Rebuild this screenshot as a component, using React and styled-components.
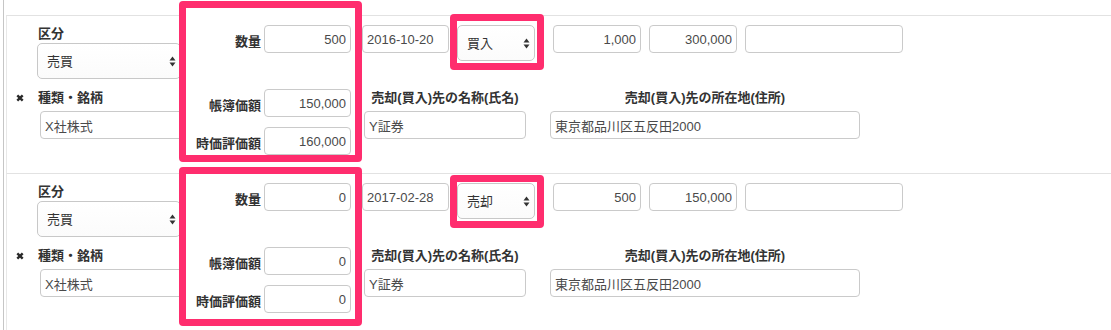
import styled, { createGlobalStyle } from 'styled-components';

const GlobalStyle = createGlobalStyle`
  html, body {
    margin: 0;
    padding: 0;
    background: #fff;
  }
  body {
    font-family: "Liberation Sans", "Noto Sans CJK JP", sans-serif;
    font-size: 13px;
    color: #333;
    overflow: hidden;
  }
`;

const PINK = '#ff2d6e';

const Page = styled.div`
  width: 1111px;
  height: 330px;
  overflow: hidden;
  box-sizing: border-box;
  padding-left: 3px;
`;

const Frame = styled.div`
  height: 100%;
  box-sizing: border-box;
  border-left: 1px solid #c6c6c6;
  padding-left: 2px;
  padding-top: 15px;
`;

const Record = styled.div`
  display: flex;
  height: 158px;
  box-sizing: border-box;
  border-top: 1px solid #e2e2e2;
  border-left: 1px solid #e8e8e8;
`;

const KindCol = styled.div`
  width: 172px;
  flex: none;
  box-sizing: border-box;
  padding: 9px 0 0 30px;
  display: flex;
  flex-direction: column;
  align-items: flex-start;
`;

const Label = styled.div`
  font-weight: bold;
  font-size: 13px;
  line-height: 18px;
  color: #333;
  white-space: nowrap;
  margin-left: ${(p) => p.$indent || 0}px;
`;

const LabelRow = styled.div`
  display: flex;
  align-items: center;
  margin: 10px 0 0 -21px;
  gap: 14px;
`;

const Input = styled.input`
  box-sizing: border-box;
  width: ${(p) => p.$w}px;
  height: 28px;
  margin: 0 0 0 ${(p) => p.$ml || 0}px;
  padding: 0 4px;
  border: 1px solid #cacaca;
  border-radius: 4px;
  background: #fff;
  font-family: "Liberation Sans", "Noto Sans CJK JP", sans-serif;
  font-size: 13px;
  color: #4a4a4a;
  text-align: ${(p) => (p.$num ? 'right' : 'left')};
  outline: none;
  flex: none;
`;

const StackInput = styled(Input)`
  margin-top: 4px;
`;

const SelectBox = styled.div`
  position: relative;
  width: ${(p) => p.$w}px;
  height: 36px;
  flex: none;
`;

const Select = styled.select`
  appearance: none;
  -webkit-appearance: none;
  box-sizing: border-box;
  width: 100%;
  height: 100%;
  padding: 0 0 0 9px;
  border: 1px solid #c8c8c8;
  border-radius: 5px;
  background: linear-gradient(#fff, #fbfbfb);
  font-family: "Liberation Sans", "Noto Sans CJK JP", sans-serif;
  font-size: 13px;
  color: #333;
  outline: none;
`;

const Arrows = styled.svg`
  position: absolute;
  right: 5px;
  top: 13px;
  pointer-events: none;
`;

const AmountBox = styled.div`
  position: relative;
  z-index: 1;
  width: 183px;
  height: ${(p) => p.$h}px;
  flex: none;
  box-sizing: border-box;
  margin-top: -${(p) => p.$lift}px;
  padding: ${(p) => p.$lift + 2}px 4px 0 0;
  border: 7px solid ${PINK};
  border-radius: 4px;
  background: #fff;
`;

const AmountRow = styled.div`
  display: flex;
  justify-content: flex-end;
  align-items: flex-start;
  gap: 3px;
  margin-top: ${(p) => p.$mt || 0}px;
`;

const AmountLabel = styled(Label)`
  padding-top: 8px;
`;

const TradeCol = styled.div`
  flex: 1;
  padding-top: 9px;
`;

const TopRow = styled.div`
  display: flex;
  align-items: flex-start;
  height: 28px;
`;

const SelectMark = styled.div`
  position: relative;
  z-index: 1;
  flex: none;
  margin: -${(p) => 7 + p.$pt}px 0 0 1px;
  padding: ${(p) => p.$pt}px 2px 2px 0;
  border: 7px solid ${PINK};
  border-radius: 4px;
  background: #fff;
`;

const PartyRow = styled.div`
  display: flex;
  margin-top: 36px;
`;

const Party = styled.div`
  display: flex;
  flex-direction: column;
  align-items: center;
  margin-left: ${(p) => p.$ml}px;
`;

const UpDown = () => (
  <Arrows width="7" height="11" viewBox="0 0 7 11">
    <path d="M3.5 0.5 L6.5 4.5 L0.5 4.5 Z" fill="#333" />
    <path d="M3.5 10.5 L6.5 6.5 L0.5 6.5 Z" fill="#333" />
  </Arrows>
);

const Remove = () => (
  <svg width="8" height="8" viewBox="0 0 8 8">
    <path d="M1.3 1.3 L6.7 6.7 M6.7 1.3 L1.3 6.7" stroke="#2a2a2a" strokeWidth="2.4" strokeLinecap="butt" />
  </svg>
);

const records = [
  {
    id: 1,
    qty: '500',
    book: '150,000',
    market: '160,000',
    date: '2016-10-20',
    side: '買入',
    price: '1,000',
    total: '300,000',
    lift: 15,
    h: 161,
    pt: 4,
  },
  {
    id: 2,
    qty: '0',
    book: '0',
    market: '0',
    date: '2017-02-28',
    side: '売却',
    price: '500',
    total: '150,000',
    lift: 7,
    h: 159,
    pt: 1,
  },
];

const TradeRecord = ({ r }) => (
  <Record>
    <KindCol>
      <Label $indent={1}>区分</Label>
      <SelectBox $w={144}>
        <Select defaultValue="売買">
          <option>売買</option>
        </Select>
        <UpDown />
      </SelectBox>
      <LabelRow>
        <Remove />
        <Label>種類・銘柄</Label>
      </LabelRow>
      <StackInput $w={145} $ml={3} defaultValue="X社株式" />
    </KindCol>

    <AmountBox $lift={r.lift} $h={r.h}>
      <AmountRow>
        <AmountLabel>数量</AmountLabel>
        <Input $w={87} $num defaultValue={r.qty} />
      </AmountRow>
      <AmountRow $mt={36}>
        <AmountLabel>帳簿価額</AmountLabel>
        <Input $w={87} $num defaultValue={r.book} />
      </AmountRow>
      <AmountRow $mt={10}>
        <AmountLabel>時価評価額</AmountLabel>
        <Input $w={87} $num defaultValue={r.market} />
      </AmountRow>
    </AmountBox>

    <TradeCol>
      <TopRow>
        <Input $w={87} defaultValue={r.date} />
        <SelectMark $pt={r.pt}>
          <SelectBox $w={78}>
            <Select defaultValue={r.side}>
              <option>買入</option>
              <option>売却</option>
            </Select>
            <UpDown />
          </SelectBox>
        </SelectMark>
        <Input $w={88} $ml={9} $num defaultValue={r.price} />
        <Input $w={88} $ml={8} $num defaultValue={r.total} />
        <Input $w={158} $ml={8} defaultValue="" />
      </TopRow>
      <PartyRow>
        <Party $ml={2}>
          <Label>売却(買入)先の名称(氏名)</Label>
          <StackInput $w={162} defaultValue="Y証券" />
        </Party>
        <Party $ml={24}>
          <Label>売却(買入)先の所在地(住所)</Label>
          <StackInput $w={310} defaultValue="東京都品川区五反田2000" />
        </Party>
      </PartyRow>
    </TradeCol>
  </Record>
);

export default function App() {
  return (
    <>
      <GlobalStyle />
      <Page>
        <Frame>
          {records.map((r) => (
            <TradeRecord key={r.id} r={r} />
          ))}
        </Frame>
      </Page>
    </>
  );
}
